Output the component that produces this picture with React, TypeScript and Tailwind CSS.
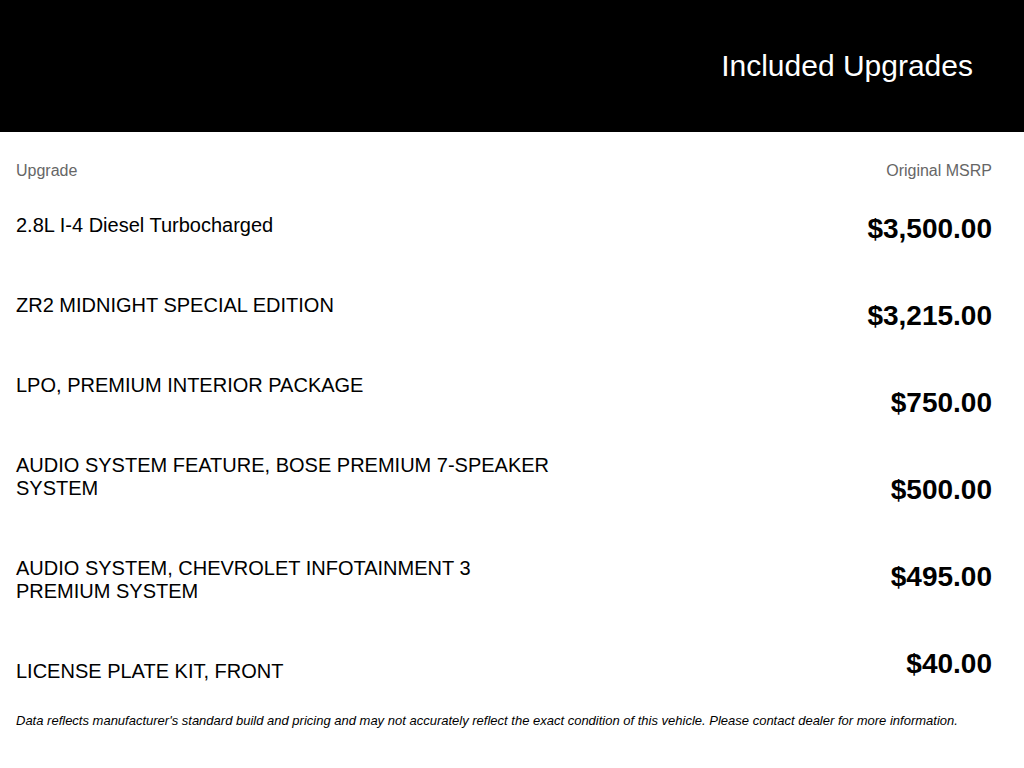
import React from 'react';

interface Upgrade {
    name: string;
    msrp: string;
}

const upgrades: Upgrade[] = [
    { name: '2.8L I-4 Diesel Turbocharged', msrp: '$3,500.00' },
    { name: 'ZR2 MIDNIGHT SPECIAL EDITION', msrp: '$3,215.00' },
    { name: 'LPO, PREMIUM INTERIOR PACKAGE', msrp: '$750.00' },
    { name: 'AUDIO SYSTEM FEATURE, BOSE PREMIUM 7-SPEAKER SYSTEM', msrp: '$500.00' },
    { name: 'AUDIO SYSTEM, CHEVROLET INFOTAINMENT 3 PREMIUM SYSTEM', msrp: '$495.00' },
    { name: 'LICENSE PLATE KIT, FRONT', msrp: '$40.00' },
];

const App: React.FC = () => {
    return (
        <div className="w-[1024px] min-h-[768px] bg-white text-black font-['Liberation_Sans',Arial,sans-serif]">
            {/* Header */}
            <header className="h-[132px] bg-black flex items-center justify-end pr-[51px]">
                <h1 className="text-[30px] leading-[34px] text-white">Included Upgrades</h1>
            </header>

            <div className="pl-4 pr-8">
                {/* Column titles */}
                <div className="flex justify-between pt-[30px] text-[16px] leading-[18px] text-[#666666]">
                    <span>Upgrade</span>
                    <span>Original MSRP</span>
                </div>

                {/* Upgrades list */}
                <div className="flex justify-between mt-[34px]">
                    <div className="w-[545px] flex flex-col gap-[57px]">
                        {upgrades.map((u, i) => (
                            <div key={i} className="text-[20px] leading-[23px]">
                                {u.name}
                            </div>
                        ))}
                    </div>
                    <div className="flex flex-col items-end gap-[57px]">
                        {upgrades.map((u, i) => (
                            <div key={i} className="text-[28px] leading-[30px] font-bold">
                                {u.msrp}
                            </div>
                        ))}
                    </div>
                </div>

                <p className="mt-[30px] text-[13px] leading-[15px] italic">
                    Data reflects manufacturer's standard build and pricing and may not accurately reflect the exact condition of this vehicle. Please contact dealer for more information.
                </p>
            </div>
        </div>
    );
};

export default App;
